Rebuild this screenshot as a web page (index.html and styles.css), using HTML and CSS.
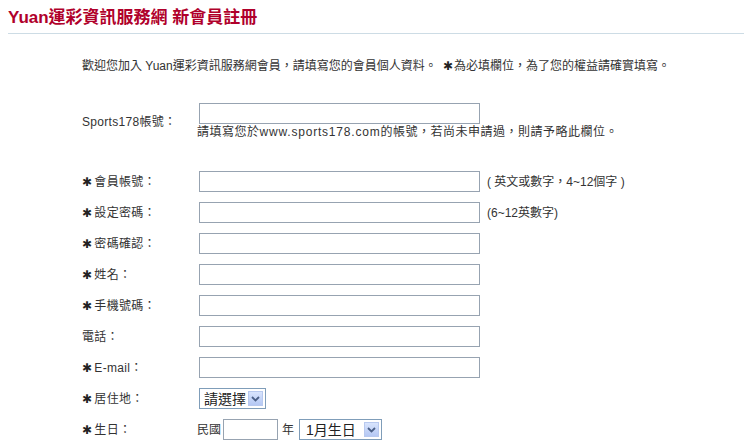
FILE: index.html
```html
<!DOCTYPE html>
<html lang="zh-Hant">
<head>
<meta charset="utf-8">
<title>新會員註冊</title>
<link rel="stylesheet" href="styles.css">
</head>
<body>
<div class="header"><h1>Yuan運彩資訊服務網 新會員註冊</h1></div>
<p class="intro">歡迎您加入 Yuan運彩資訊服務網會員，請填寫您的會員個人資料。 <span class="star">✱</span>為必填欄位，為了您的權益請確實填寫。</p>
<form class="form">
  <div class="row row-sports">
    <label class="label">Sports178帳號：</label>
    <div class="field field-col">
      <input class="text" type="text">
      <span class="hint">請填寫您於<span class="url">www.sports178.com</span>的帳號，若尚未申請過，則請予略此欄位。</span>
    </div>
  </div>
  <div class="row row-first">
    <label class="label"><span class="star">✱</span>會員帳號：</label>
    <div class="field"><input class="text" type="text"><span class="note">( 英文或數字，4~12個字 )</span></div>
  </div>
  <div class="row">
    <label class="label"><span class="star">✱</span>設定密碼：</label>
    <div class="field"><input class="text" type="password"><span class="note">(6~12英數字)</span></div>
  </div>
  <div class="row">
    <label class="label"><span class="star">✱</span>密碼確認：</label>
    <div class="field"><input class="text" type="password"></div>
  </div>
  <div class="row">
    <label class="label"><span class="star">✱</span>姓名：</label>
    <div class="field"><input class="text" type="text"></div>
  </div>
  <div class="row">
    <label class="label"><span class="star">✱</span>手機號碼：</label>
    <div class="field"><input class="text" type="text"></div>
  </div>
  <div class="row">
    <label class="label">電話：</label>
    <div class="field"><input class="text" type="text"></div>
  </div>
  <div class="row">
    <label class="label"><span class="star">✱</span>E-mail：</label>
    <div class="field"><input class="text" type="text"></div>
  </div>
  <div class="row">
    <label class="label"><span class="star">✱</span>居住地：</label>
    <div class="field">
      <span class="sel sel-city"><select><option>請選擇</option></select><span class="arrow"><svg width="9" height="6" viewBox="0 0 9 6"><path d="M1 1 L4.5 4.5 L8 1" fill="none" stroke="#4a5f86" stroke-width="1.8"/></svg></span></span>
    </div>
  </div>
  <div class="row">
    <label class="label"><span class="star">✱</span>生日：</label>
    <div class="field">
      <span class="txt">民國</span><input class="text year" type="text"><span class="txt yr">年</span>
      <span class="sel sel-month"><select><option>1月生日</option></select><span class="arrow"><svg width="9" height="6" viewBox="0 0 9 6"><path d="M1 1 L4.5 4.5 L8 1" fill="none" stroke="#4a5f86" stroke-width="1.8"/></svg></span></span>
    </div>
  </div>
</form>
</body>
</html>
```
FILE: styles.css
```css
html, body {
  background: #ffffff;
}
body {
  margin: 8px;
  font-family: "Liberation Sans", "Noto Sans CJK TC", sans-serif;
  font-size: 12px;
  color: #333333;
}
.header {
  padding-bottom: 5px;
  border-bottom: 1px solid #cddce5;
}
.header h1 {
  margin: 0;
  font-size: 17px;
  line-height: 20px;
  font-weight: bold;
  color: #b0002b;
}
.intro {
  margin: 24px 0 0 0;
  padding-left: 74px;
  line-height: 16px;
}
.star {
  font-family: "DejaVu Sans", sans-serif;
  font-size: 12px;
  color: #222;
  margin-right: 2px;
}
.intro .star {
  margin-left: 3px;
  margin-right: 1px;
}
.form {
  margin: 27px 0 0 74px;
  display: flex;
  flex-direction: column;
}
.row {
  display: grid;
  grid-template-columns: 115px 1fr;
  align-items: center;
  height: 31px;
}
.row-sports {
  height: auto;
  padding: 2px 0;
}
.row-first {
  margin-top: 24px;
}
.label {
  line-height: 16px;
  white-space: nowrap;
  letter-spacing: 0.3px;
}
.field {
  display: flex;
  align-items: center;
}
.field-col {
  flex-direction: column;
  align-items: flex-start;
}
.text {
  box-sizing: border-box;
  width: 281px;
  height: 21px;
  margin: 0 0 0 2px;
  padding: 1px 3px;
  border: 1px solid #97a3b1;
  background: #ffffff;
  font: inherit;
}
.hint {
  line-height: 16px;
  letter-spacing: 0.5px;
}
.url {
  letter-spacing: 0.8px;
}
.note {
  margin-left: 7px;
  line-height: 16px;
}
.txt {
  line-height: 16px;
}
.year {
  width: 55px;
  margin-left: 2px;
}
.yr {
  margin-left: 4px;
}
.sel {
  position: relative;
  display: inline-block;
  margin-left: 2px;
}
.sel-month {
  margin-left: 5px;
}
.sel select {
  -webkit-appearance: none;
  appearance: none;
  box-sizing: border-box;
  height: 21px;
  border: 1px solid #7f9db9;
  background: #ffffff;
  font-family: "Liberation Sans", "Noto Sans CJK TC", sans-serif;
  font-size: 14px;
  color: #222;
  padding: 0 0 0 4px;
  margin: 0;
  border-radius: 0;
}
.sel-city select {
  width: 67px;
}
.sel-month select {
  width: 83px;
  padding-left: 6px;
}
.arrow {
  position: absolute;
  right: 3px;
  top: 3px;
  width: 15px;
  height: 15px;
  box-sizing: border-box;
  background: linear-gradient(#d8e4fd, #b5c8f4);
  border: 1px solid #b8c9ef;
  display: flex;
  align-items: center;
  justify-content: center;
  pointer-events: none;
}
```
